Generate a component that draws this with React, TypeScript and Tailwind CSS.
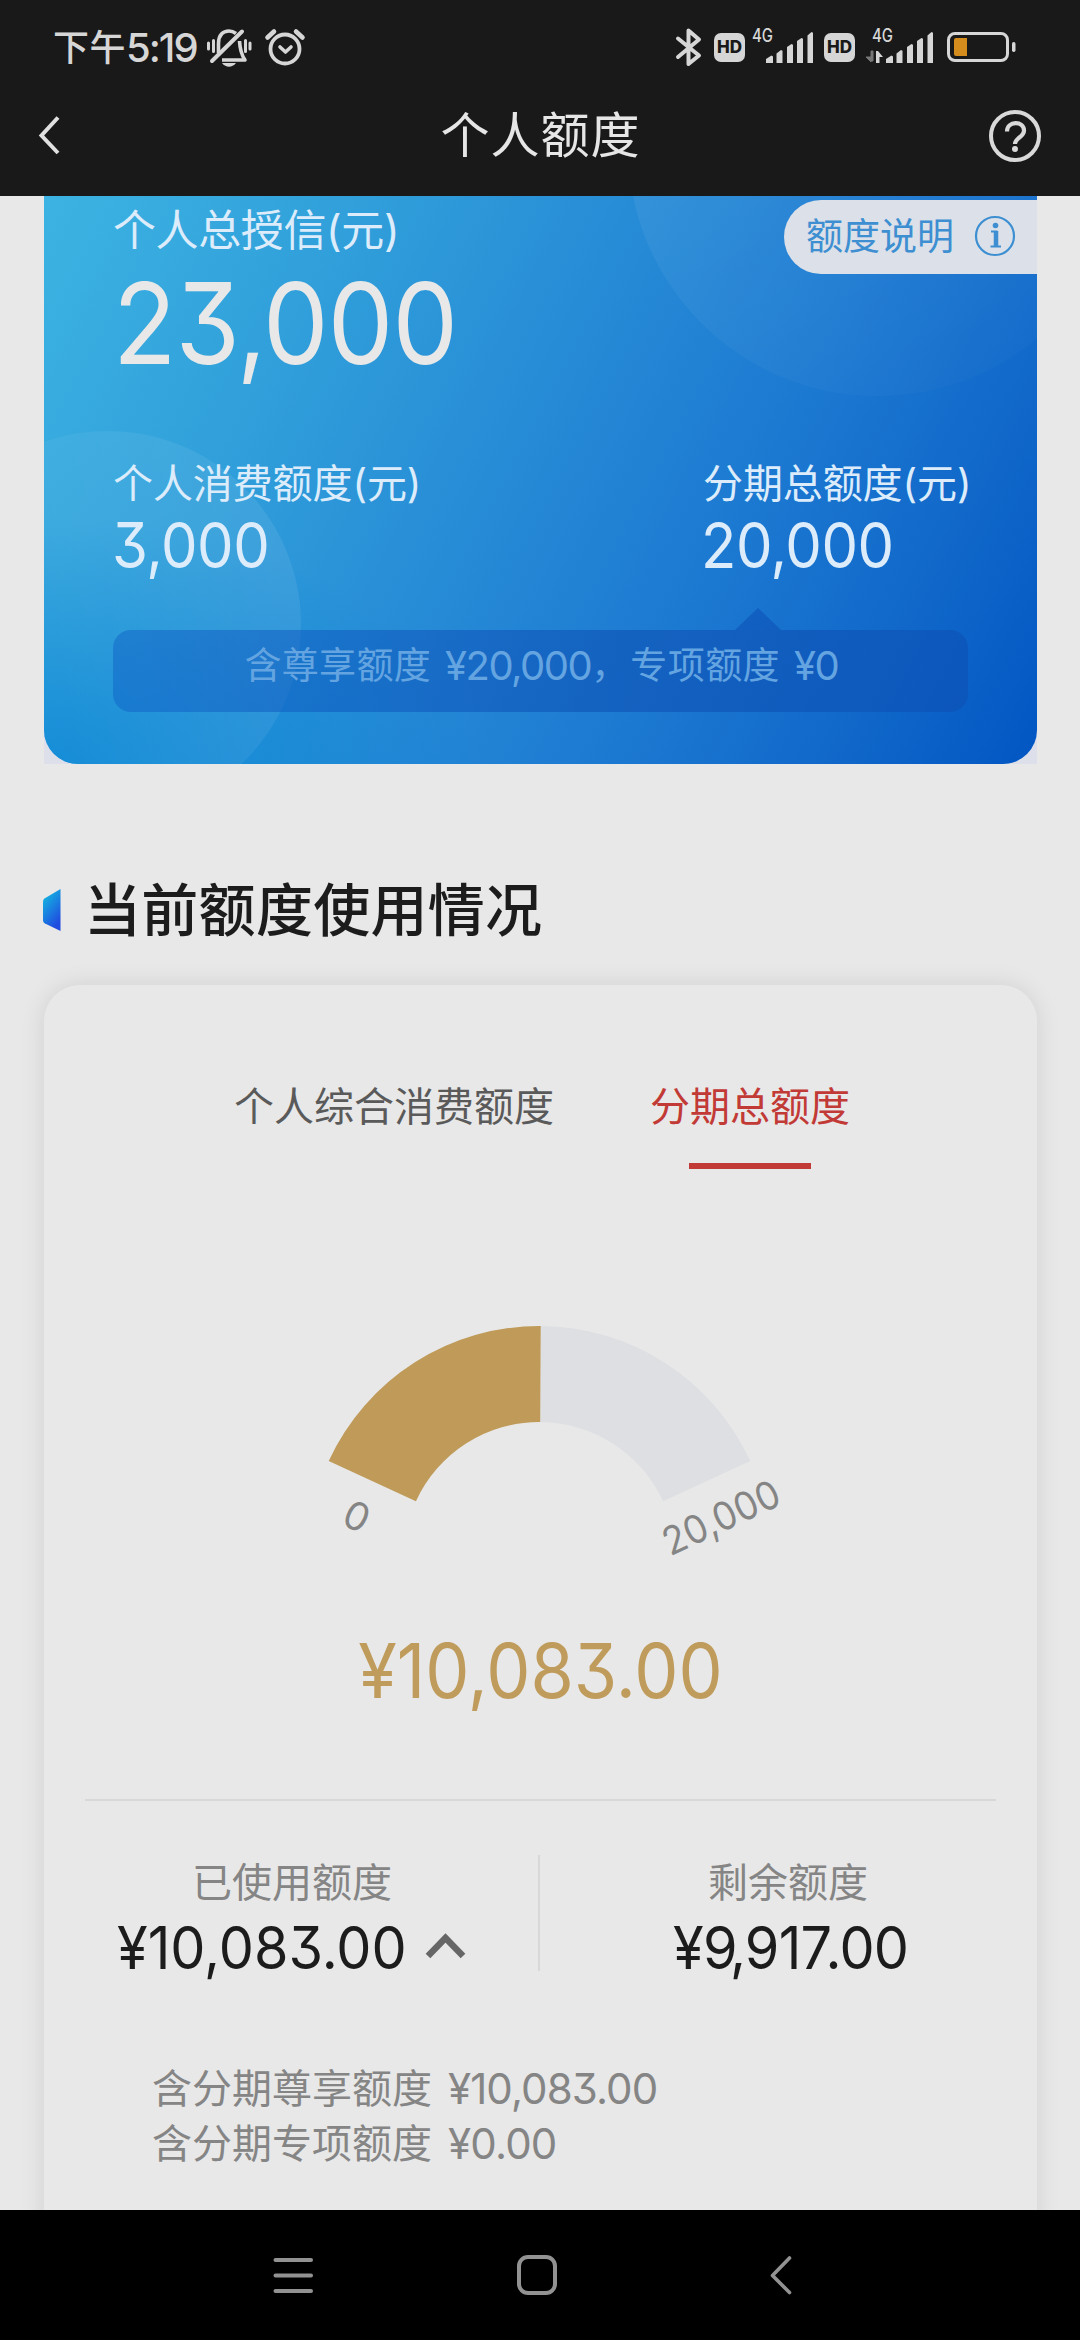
import React from "react";

function T({ className = "", children }: { className?: string; children: React.ReactNode }) {
  return <span className={`whitespace-pre ${className}`}>{children}</span>;
}

function HdBadge() {
  return (
    <div className="flex h-[29px] w-[31px] items-center justify-center rounded-[7px] bg-[#d6d6d6] text-[17px] leading-none font-extrabold text-[#191919]">
      HD
    </div>
  );
}

function Signal({ data }: { data?: boolean }) {
  return (
    <svg width="68" height="38" viewBox="0 0 68 38">
      {data && (
        <>
          <path d="M5 25v10h2V25zM0 31l5 5v-5z" fill="#777" stroke="#777" />
          <path d="M10 25h2l5 6h-3.500v6h-3.500z" fill="#d6d6d6" />
        </>
      )}
      <g fill="#d6d6d6">
        <path d="M20 33l5.500-3.500 1.500 1v6.500h-7z" />
        <path d="M30.500 27.500l4.500-3.500 1.500.8V37h-6z" />
        <path d="M41 21l4.500-3 1.500.8V37h-6z" />
        <path d="M51 15l4.500-3 1.500.8V37h-6z" />
        <path d="M61.500 9.500l4-3.500 1.500.8V37h-5.500z" />
      </g>
      <text x="6" y="15.500" fontSize="18" textLength="21" lengthAdjust="spacingAndGlyphs" fill="#d6d6d6" fontFamily="Inter" fontWeight="500">4G</text>
    </svg>
  );
}

function StatusBar() {
  return (
    <div className="flex h-[88px] items-start pl-[53px] pt-[24px] text-[#d6d6d6]">
      <div className="flex h-[48px] w-[150px] items-center">
        <T className="w-[73px] text-[36px] leading-[44px] font-medium tracking-[.5px]">下午</T>
        <T className="text-[40px] leading-[44px] font-medium tracking-[-2px]">5:19</T>
      </div>
      <svg className="ml-[3px] mt-[3px]" width="46" height="42" viewBox="0 0 46 42" fill="none" stroke="#d6d6d6">
        <path d="M2.500 16v6M7.500 13.500v11M39.500 13.500v11M44 16v6" strokeWidth="3" strokeLinecap="round" />
        <path d="M12.500 26V16.500C12.500 8 17 4 23 4c3 0 5 1 7 2.500M33.500 14c.5 9 2 14 5.500 19H16" strokeWidth="3.600" strokeLinejoin="round" />
        <path d="M6 34L36 4.500" strokeWidth="4" strokeLinecap="round" />
        <path d="M16 36h14c-4 5-10 5-14 0z" fill="#d6d6d6" stroke="none" />
      </svg>
      <svg className="ml-[12px] mt-[4px]" width="42" height="40" viewBox="0 0 42 40" fill="none" stroke="#d6d6d6">
        <circle cx="21" cy="21" r="14.500" strokeWidth="3.800" />
        <path d="M3.500 9.500L10 3.500M32 3.500l6.500 6" strokeWidth="4.600" strokeLinecap="round" />
        <path d="M16 19l5.500 5 5.500-5" strokeWidth="3.600" strokeLinecap="round" strokeLinejoin="round" />
      </svg>
      <svg className="ml-[369px] mt-[3px]" width="28" height="42" viewBox="0 0 28 42" fill="none" stroke="#d6d6d6" strokeWidth="4" strokeLinejoin="round" strokeLinecap="round">
        <path d="M3 11.500L24 28.500 13.500 37V3.500L24 12.500 3 30" />
      </svg>
      <div className="ml-[11px] mt-[9px]"><HdBadge /></div>
      <div className="ml-[1px] mt-[2px]"><Signal /></div>
      <div className="ml-[10px] mt-[9px]"><HdBadge /></div>
      <div className="ml-[11px] mt-[2px]"><Signal data /></div>
      <svg className="ml-[12px] mt-[7px]" width="72" height="34" viewBox="0 0 72 34">
        <rect x="2.500" y="2.500" width="59" height="27" rx="6.500" fill="none" stroke="#d6d6d6" strokeWidth="3" />
        <path d="M8 9a2 2 0 0 1 2-2h11v18H10a2 2 0 0 1-2-2z" fill="#d48d1c" />
        <rect x="66" y="11" width="3.500" height="10" rx="1.700" fill="#d6d6d6" />
      </svg>
    </div>
  );
}

function TitleBar() {
  return (
    <div className="flex h-[108px] items-start justify-between pl-[38px] pr-[38px]">
      <svg className="mt-[27px]" width="55" height="42" viewBox="0 0 55 42" fill="none" stroke="#e0e0e0" strokeWidth="4">
        <path d="M20 2.500L3.500 20.500 20 38" />
      </svg>
      <T className="mt-[20px] text-[49px] leading-[56px] tracking-[1px] text-[#e6e6e6]">个人额度</T>
      <svg className="mt-[21px]" width="54" height="54" viewBox="0 0 54 54" fill="none" stroke="#d9d9d9">
        <circle cx="27" cy="27" r="24" strokeWidth="4" />
        <path d="M19 22.500c0-11 17-11 17-1 0 7-9 7-9 13.500" strokeWidth="4.200" />
        <circle cx="27" cy="40" r="3" fill="#d9d9d9" stroke="none" />
      </svg>
    </div>
  );
}

function CreditCard() {
  return (
    <section className="relative mx-[44px] h-[568px] w-[993px] shrink-0 bg-[#dde0ea]">
      <div className="relative h-full overflow-hidden rounded-b-[34px] bg-[linear-gradient(118deg,#3cb3e2_0%,#309eda_26%,#268ad6_48%,#1c79d1_67%,#1067c9_85%,#0256c3_100%)] text-[#dcecfb]">
        <div className="absolute bottom-0 left-0 h-[250px] w-[440px] bg-[radial-gradient(ellipse_at_bottom_left,#0080d4b0,#0080d400_70%)]" />
        <div className="absolute -top-[299px] left-[584px] size-[499px] rounded-full bg-[linear-gradient(150deg,#ffffff0e_40%,#ffffff04_90%)]" />
        <div className="absolute left-[-130px] top-[235px] size-[387px] rounded-full bg-[linear-gradient(250deg,#ffffff14_10%,#ffffff04_80%)]" />
        <div className="relative flex h-full flex-col">
          <div className="flex justify-between">
            <div className="flex flex-col pl-[69px]">
              <T className="mt-[9px] text-[43px] leading-[50px] tracking-[-.4px]">个人总授信(元)</T>
              <T className="origin-left scale-x-[.92] text-[113px] leading-[136px] tracking-[-1px] text-[#e8e8e8]">23,000</T>
            </div>
            <div className="mt-[4px] flex h-[74px] w-[253px] items-start rounded-l-[37px] bg-[#dce0e8] pl-[22px] text-[#3d8fd1]">
              <T className="mt-[15px] text-[37px] leading-[44px]">额度说明</T>
              <svg className="ml-[20px] mt-[15px]" width="42" height="42" viewBox="0 0 42 42" fill="none" stroke="currentColor">
                <circle cx="21" cy="21" r="19" strokeWidth="2.200" />
                <circle cx="21.500" cy="10.500" r="2.800" fill="currentColor" stroke="none" />
                <path d="M17 16.500h5.500v15" strokeWidth="2" />
                <path d="M22 16v15.500" strokeWidth="4.500" />
                <path d="M16.500 31.500h10.500" strokeWidth="2" />
              </svg>
            </div>
          </div>
          <div className="mt-[69px] flex h-[120px] justify-between pl-[69px] pr-[68px]">
            <div className="flex flex-col">
              <T className="text-[40px] leading-[48px] tracking-[-.1px]">个人消费额度(元)</T>
              <T className="-ml-[1px] mt-[5px] origin-left scale-x-[.92] text-[63px] leading-[64px] tracking-[-.5px]">3,000</T>
            </div>
            <div className="flex w-[266px] flex-col">
              <T className="text-[40px] leading-[48px] tracking-[-.1px]">分期总额度(元)</T>
              <T className="-ml-[2px] mt-[5px] origin-left scale-x-[.92] text-[63px] leading-[64px] tracking-[-.5px]">20,000</T>
            </div>
          </div>
          <div className="ml-[691px] mt-[28px] h-[22px] w-[46px] shrink-0 bg-[#0d50b490] [clip-path:polygon(50%_0,100%_100%,0_100%)]" />
          <div className="ml-[69px] flex h-[82px] w-[855px] shrink-0 justify-center rounded-[18px] bg-[linear-gradient(90deg,#0d5cc470,#0d50b498_60%)] text-[#64a5e1]">
            <div className="flex w-[592px] items-start pt-[13px]">
              <T className="text-[37px] leading-[46px] tracking-[.3px]">含尊享额度</T>
              <T className="ml-[14px] text-[40px] leading-[46px] tracking-[-1.500px]">¥20,000</T>
              <T className="text-[37px] leading-[46px]">，</T>
              <T className="ml-[2px] text-[37px] leading-[46px] tracking-[.4px]">专项额度</T>
              <T className="ml-[14px] text-[40px] leading-[46px] tracking-[-1.500px]">¥0</T>
            </div>
          </div>
        </div>
      </div>
    </section>
  );
}

function Gauge() {
  const cx = 539.5, cy = 257, R = 232, r = 136;
  const pt = (rad: number, deg: number) => {
    const a = (deg * Math.PI) / 180;
    return `${(cx + rad * Math.cos(a)).toFixed(2)} ${(cy - rad * Math.sin(a)).toFixed(2)}`;
  };
  const arc = (from: number, to: number) =>
    `M${pt(R, from)}A${R} ${R} 0 0 1 ${pt(R, to)}L${pt(r, to)}A${r} ${r} 0 0 0 ${pt(r, from)}Z`;
  return (
    <svg className="-ml-[44px]" width="1080" height="270" viewBox="0 0 1080 270">
      <path d={arc(89.7, 24.7)} fill="#dddfe2" />
      <path d={arc(155.3, 89.7)} fill="#bf9a58" />
      <g fill="#858585" fontFamily="Inter" fontSize="39" textAnchor="middle">
        <text transform="translate(351 228) rotate(25)">0</text>
        <text transform="translate(727 229) rotate(-25)" textLength="125" lengthAdjust="spacingAndGlyphs">20,000</text>
      </g>
    </svg>
  );
}

function UsagePanel() {
  return (
    <section className="mx-[44px] mt-[36px] flex h-[1300px] w-[993px] shrink-0 flex-col rounded-t-[36px] bg-[#e8e8e8] shadow-[0_0_24px_#0000001a]">
      <div className="mt-[98px] flex gap-[96px] pl-[190px]">
        <T className="text-[40px] leading-[48px] text-[#5a5a5a]">个人综合消费额度</T>
        <div className="flex flex-col items-center">
          <T className="text-[40px] leading-[48px] text-[#c23a36]">分期总额度</T>
          <div className="mt-[32px] h-[6px] w-[122px] bg-[#c23a36]" />
        </div>
      </div>
      <div className="mt-[132px] h-[270px]"><Gauge /></div>
      <T className="mt-[55px] scale-x-[.935] text-center text-[75px] leading-[90px] text-[#c09c5c]">¥10,083.00</T>
      <div className="mx-[41px] mt-[83px] h-[2px] bg-[#d8d8d8]" />
      <div className="mt-[54px] flex h-[125px]">
        <div className="flex w-[494px] flex-col pl-[73px]">
          <T className="ml-[75px] mt-[4px] text-[40px] leading-[48px] text-[#858585]">已使用额度</T>
          <div className="mt-[9px] flex">
            <T className="origin-left scale-x-[.945] text-[59px] leading-[64px] text-[#1c1c1c]">¥10,083.00</T>
            <svg className="ml-[1px] mt-[16px]" width="42" height="28" viewBox="0 0 42 28" fill="none" stroke="#666" strokeWidth="6.500">
              <path d="M3 24L20.500 6 38 24" />
            </svg>
          </div>
        </div>
        <div className="h-[116px] w-[2px] bg-[#d8d8d8]" />
        <div className="flex flex-1 flex-col pl-[133px]">
          <T className="ml-[35px] mt-[4px] text-[40px] leading-[48px] text-[#858585]">剩余额度</T>
          <T className="mt-[9px] origin-left scale-x-[.945] text-[59px] leading-[64px] tracking-[-.8px] text-[#1c1c1c]">
            ¥<span className="tracking-[-8px]">9</span>,91<span className="tracking-[-7px]">7</span>.00
          </T>
        </div>
      </div>
      <div className="mt-[81px] flex flex-col pl-[108px] text-[#858585]">
        <div className="flex h-[55px]">
          <T className="text-[40px] leading-[55px]">含分期尊享额度</T>
          <T className="ml-[16px] text-[42px] leading-[55px] tracking-[-.9px]">¥10,083.00</T>
        </div>
        <div className="flex h-[55px]">
          <T className="text-[40px] leading-[55px]">含分期专项额度</T>
          <T className="ml-[16px] text-[42px] leading-[55px] tracking-[-.8px]">¥0.00</T>
        </div>
      </div>
    </section>
  );
}

function NavBar() {
  return (
    <nav className="flex h-[130px] shrink-0 items-center bg-black pl-[270px]">
      <svg width="46" height="46" viewBox="0 0 46 46" stroke="#929292" strokeWidth="4" strokeLinecap="round">
        <path d="M5.500 8h35.500M5.500 23.500h35.500M5.500 39h35.500" />
      </svg>
      <svg className="ml-[198px]" width="46" height="46" viewBox="0 0 46 46" fill="none" stroke="#929292" strokeWidth="4">
        <rect x="5" y="5" width="36" height="36" rx="9" />
      </svg>
      <svg className="ml-[208px]" width="26" height="46" viewBox="0 0 26 46" fill="none" stroke="#929292" strokeWidth="3.600" strokeLinecap="round" strokeLinejoin="round">
        <path d="M21.500 6L4.500 23.500l17 17" />
      </svg>
    </nav>
  );
}

export default function App() {
  return (
    <div className="flex h-[2340px] w-[1080px] flex-col overflow-hidden bg-[#e8e8e8] font-[Inter,'Noto_Sans_CJK_SC',sans-serif] [font-feature-settings:'cv09'_1]">
      <header className="h-[196px] shrink-0 bg-[#191919]">
        <StatusBar />
        <TitleBar />
      </header>
      <main className="flex h-[2014px] flex-col overflow-hidden">
        <CreditCard />
        <div className="mt-[112px] flex h-[73px] shrink-0 items-start pl-[43px]">
          <svg className="mt-[13px]" width="18" height="42" viewBox="0 0 18 42">
            <defs>
              <linearGradient id="mark" x1="0" y1="0" x2=".5" y2="1">
                <stop offset="0" stopColor="#12c6e0" />
                <stop offset="1" stopColor="#1f4be0" />
              </linearGradient>
            </defs>
            <path d="M17.500 0v42L2 34.500Q0 33.500 0 31.500V12.500Q0 10.500 1.500 9.500z" fill="url(#mark)" />
          </svg>
          <T className="ml-[23px] mt-[1px] text-[57px] leading-[68px] font-medium tracking-[.3px] text-[#1c1c1c]">当前额度使用情况</T>
        </div>
        <UsagePanel />
      </main>
      <NavBar />
    </div>
  );
}
